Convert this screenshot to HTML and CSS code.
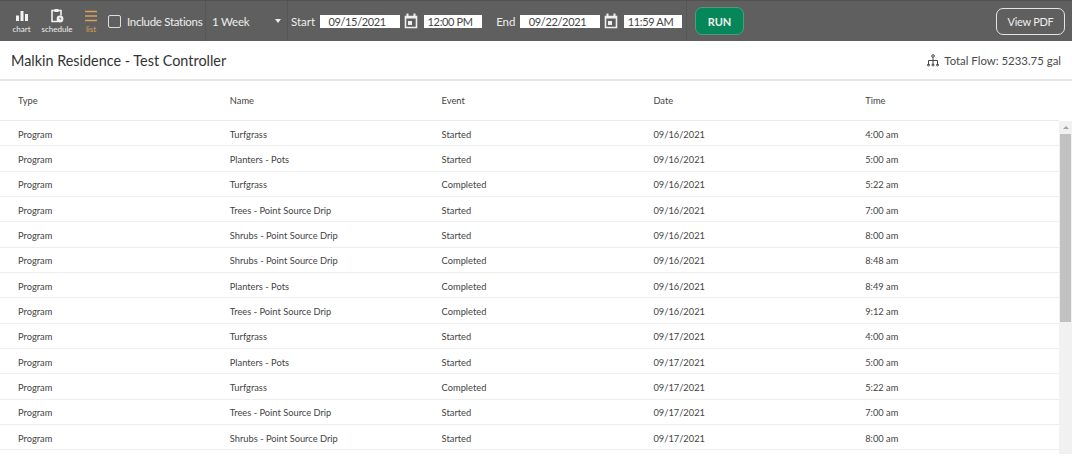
FILE: index.html
```
<!DOCTYPE html>
<html lang="en">
<head>
<meta charset="utf-8">
<title>Malkin Residence - Test Controller</title>
<link rel="stylesheet" href="styles.css">
</head>
<body>
<header class="toolbar">
  <div class="views">
    <div class="view">
      <svg class="view-icon" width="14" height="14" viewBox="0 0 14 14"><path fill="#f2f2f2" d="M1 6.500h3V12H1zM5.500 2h3v10h-3zM10 5h3v7h-3z"/></svg>
      <span>chart</span>
    </div>
    <div class="view">
      <svg class="view-icon" width="14" height="15" viewBox="0 0 14 15"><path fill="none" stroke="#f2f2f2" stroke-width="1.600" d="M5 2.500H2v11h6"/><path fill="none" stroke="#f2f2f2" stroke-width="1.600" d="M8 2.500h3v5"/><path fill="#f2f2f2" d="M4.500 1h4v3h-4z"/><circle cx="10" cy="11" r="3.400" fill="#f2f2f2"/><path stroke="#5f5f5f" d="M10 9.500V11h1.200" fill="none"/></svg>
      <span>schedule</span>
    </div>
    <div class="view active">
      <svg class="view-icon" width="14" height="14" viewBox="0 0 14 14"><path stroke="#d9a15a" stroke-width="1.500" d="M1 2.500h12M1 7h12M1 11.500h12"/></svg>
      <span>list</span>
    </div>
  </div>
  <div class="check"><span class="box"></span><span>Include Stations</span></div>
  <div class="range"><span>1 Week</span><span class="caret"></span></div>
  <div class="dates">
    <span class="lab">Start</span>
    <span class="field date">09/15/2021</span>
    <svg class="cal" width="14" height="16" viewBox="0 0 14 16"><path fill="none" stroke="#efefef" stroke-width="1.600" d="M1.500 3.500h11v11h-11z"/><path stroke="#efefef" stroke-width="2" d="M1 4.500h12M3.500 0.500v3M10.500 0.500v3"/><path fill="#efefef" d="M4 8h4v4H4z"/></svg>
    <span class="field time">12:00 PM</span>
    <span class="lab end">End</span>
    <span class="field date">09/22/2021</span>
    <svg class="cal" width="14" height="16" viewBox="0 0 14 16"><path fill="none" stroke="#efefef" stroke-width="1.600" d="M1.500 3.500h11v11h-11z"/><path stroke="#efefef" stroke-width="2" d="M1 4.500h12M3.500 0.500v3M10.500 0.500v3"/><path fill="#efefef" d="M4 8h4v4H4z"/></svg>
    <span class="field time">11:59 AM</span>
  </div>
  <button class="run">RUN</button>
  <button class="pdf">View PDF</button>
</header>
<section class="title">
  <h1>Malkin Residence - Test Controller</h1>
  <div class="flow">
    <svg width="12" height="13" viewBox="0 0 12 13"><g fill="none" stroke="#444" stroke-width="1"><circle cx="6" cy="2" r="1.300"/><path d="M6 3.300V11M1.500 11V6.500h9V11"/><circle cx="1.500" cy="11" r="1"/><circle cx="6" cy="11" r="1"/><circle cx="10.500" cy="11" r="1"/></g></svg>
    <span>Total Flow: 5233.75 gal</span>
  </div>
</section>
<div class="thead">
  <div>Type</div><div>Name</div><div>Event</div><div>Date</div><div>Time</div>
</div>
<div class="tbody">
  <div class="rows">
    <div class="row"><div>Program</div><div>Turfgrass</div><div>Started</div><div>09/16/2021</div><div>4:00 am</div></div>
    <div class="row"><div>Program</div><div>Planters - Pots</div><div>Started</div><div>09/16/2021</div><div>5:00 am</div></div>
    <div class="row"><div>Program</div><div>Turfgrass</div><div>Completed</div><div>09/16/2021</div><div>5:22 am</div></div>
    <div class="row"><div>Program</div><div>Trees - Point Source Drip</div><div>Started</div><div>09/16/2021</div><div>7:00 am</div></div>
    <div class="row"><div>Program</div><div>Shrubs - Point Source Drip</div><div>Started</div><div>09/16/2021</div><div>8:00 am</div></div>
    <div class="row"><div>Program</div><div>Shrubs - Point Source Drip</div><div>Completed</div><div>09/16/2021</div><div>8:48 am</div></div>
    <div class="row"><div>Program</div><div>Planters - Pots</div><div>Completed</div><div>09/16/2021</div><div>8:49 am</div></div>
    <div class="row"><div>Program</div><div>Trees - Point Source Drip</div><div>Completed</div><div>09/16/2021</div><div>9:12 am</div></div>
    <div class="row"><div>Program</div><div>Turfgrass</div><div>Started</div><div>09/17/2021</div><div>4:00 am</div></div>
    <div class="row"><div>Program</div><div>Planters - Pots</div><div>Started</div><div>09/17/2021</div><div>5:00 am</div></div>
    <div class="row"><div>Program</div><div>Turfgrass</div><div>Completed</div><div>09/17/2021</div><div>5:22 am</div></div>
    <div class="row"><div>Program</div><div>Trees - Point Source Drip</div><div>Started</div><div>09/17/2021</div><div>7:00 am</div></div>
    <div class="row"><div>Program</div><div>Shrubs - Point Source Drip</div><div>Started</div><div>09/17/2021</div><div>8:00 am</div></div>
  </div>
  <div class="scrollbar">
    <span class="arrow"></span>
    <span class="thumb"></span>
  </div>
</div>
</body>
</html>
```
FILE: styles.css
```
* { box-sizing: border-box; }
html, body { margin: 0; height: 100%; overflow: hidden; }
body { background: #fff; font-family: Lato, "Liberation Sans", sans-serif; color: #444; }

.toolbar { height: 41px; background: #5f5f5f; border-top: 1px solid #525252; display: flex; align-items: center; color: #eee; font-size: 11.500px; letter-spacing: -0.2px; }
.views { display: flex; width: 108px; height: 100%; }
.view { display: flex; flex-direction: column; align-items: center; justify-content: flex-end; padding-bottom: 7px; font-size: 8px; line-height: 9px; gap: 2px; letter-spacing: 0; }
.view:nth-child(1) { width: 43px; }
.view:nth-child(2) { width: 28px; }
.view:nth-child(3) { width: 34px; padding-left: 6px; }
.view.active { color: #d9a15a; }
.view-icon { display: block; }

.check { display: flex; align-items: center; gap: 6px; width: 98px; height: 100%; border-right: 1px solid #565656; white-space: nowrap; font-size: 11.500px; letter-spacing: -0.3px; }
.box { width: 13px; height: 13px; border: 1px solid #ddd; border-radius: 2px; flex: none; }
.range { display: flex; align-items: center; width: 82px; height: 100%; padding-left: 6px; border-right: 1px solid #565656; }
.caret { margin-left: 25px; border: 3.500px solid transparent; border-top: 4px solid #eee; border-bottom: 0; }

.dates { display: flex; align-items: center; height: 100%; width: 399px; padding-left: 3px; border-right: 1px solid #565656; }
.lab { margin-right: 5px; letter-spacing: 0; }
.lab.end { margin-left: 14px; margin-right: 5px; }
.field { height: 13px; line-height: 14px; background: #fff; color: #444; font-size: 11px; letter-spacing: -0.35px; text-align: center; padding-right: 6px; }
.field.date { width: 80px; }
.field.time { width: 58px; }
.cal { margin: 0 6px 0 4px; }

.run { margin-left: 8px; width: 49px; height: 28px; border-radius: 7px; background: #05875a; border: 1px solid #4f9c7d; color: #eee; font: 700 11px Lato, sans-serif; }
.pdf { margin-left: auto; margin-right: 7px; width: 69px; height: 27px; border-radius: 7px; background: transparent; border: 1px solid #e4e4e4; color: #eee; font: 11px Lato, sans-serif; letter-spacing: -0.3px; }

.title { height: 40px; display: flex; align-items: center; justify-content: space-between; padding: 0 11px 0 11px; border-bottom: 2px solid #e6e6e6; }
h1 { margin: 0; font-size: 14.400px; font-weight: 400; color: #333; }
.flow { display: flex; align-items: center; gap: 5px; font-size: 11.400px; color: #4a4a4a; }

.thead, .row { display: grid; grid-template-columns: repeat(5, 1fr); width: 1059px; font-size: 9.300px; color: #444; }
.thead > div, .row > div { padding-left: 18px; white-space: nowrap; }
.thead { height: 40px; align-items: center; border-bottom: 1px solid #ececec; }
.tbody { display: flex; height: 333px; overflow: hidden; background: #fff; }
.rows { width: 1059px; flex: none; }
.row { height: 25.350px; align-items: center; border-bottom: 1px solid #eee; padding-top: 2px; }
.scrollbar { width: 13px; height: 100%; background: #f1f1f1; display: flex; flex-direction: column; align-items: center; }
.arrow { margin-top: 5px; border: 3px solid transparent; border-bottom: 3px solid #a3a3a3; border-top: 0; }
.thumb { margin-top: 5px; width: 11px; height: 188px; background: #c1c1c1; }
```
